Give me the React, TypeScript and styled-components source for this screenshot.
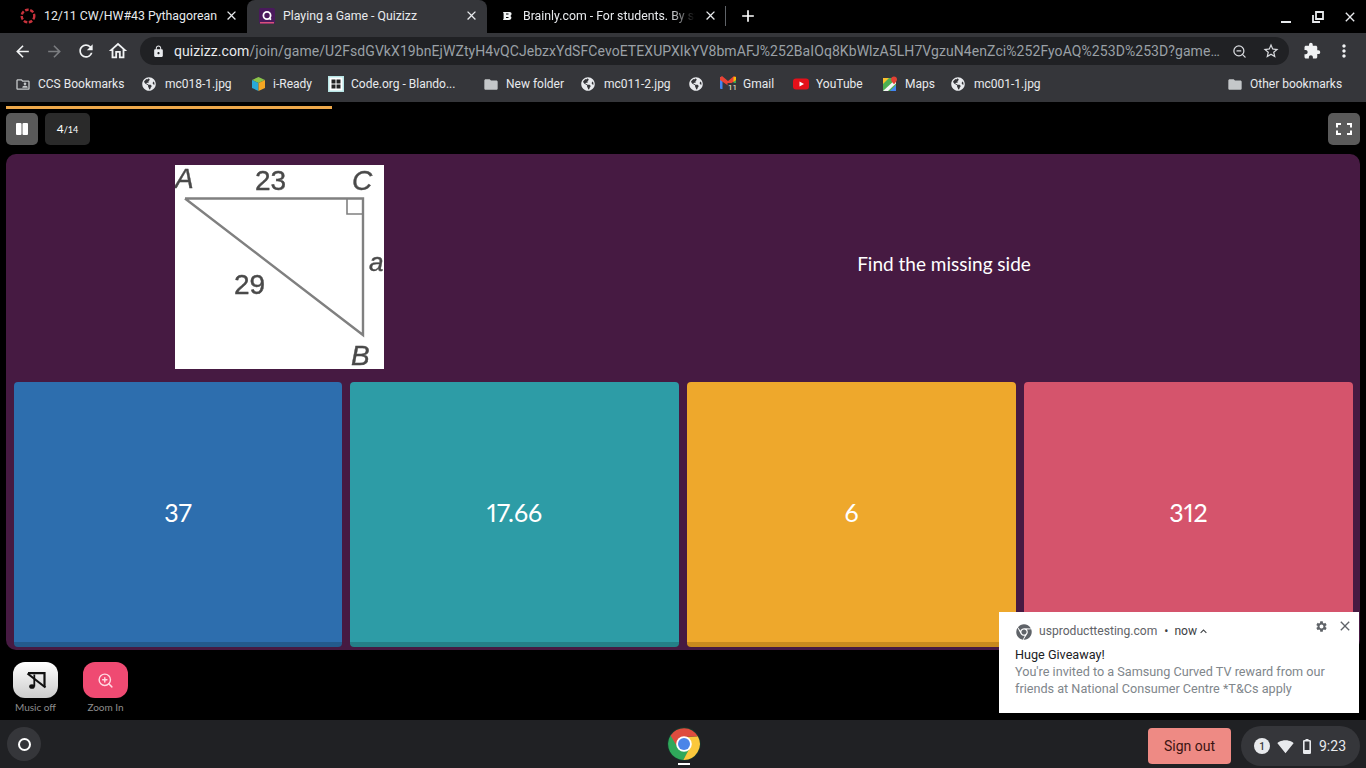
import React from "react";
import styled, { createGlobalStyle } from "styled-components";
import {
  MdArrowBack, MdArrowForward, MdRefresh, MdOutlineHome, MdLock, MdStarBorder, MdExtension,
  MdMoreVert, MdFolder, MdClose, MdAdd, MdSettings, MdKeyboardArrowUp, MdSignalWifi4Bar,
  MdOutlineFolderShared,
} from "react-icons/md";
import { FaChrome, FaGlobeAmericas } from "react-icons/fa";
import { FiZoomOut, FiZoomIn } from "react-icons/fi";

const Global = createGlobalStyle`
  html, body { margin: 0; padding: 0; background: #000; overflow: hidden; }
  * { box-sizing: border-box; }
`;

const UI = `"Roboto", "Liberation Sans", sans-serif`;
const QUIZ = `"Lato", "Open Sans", sans-serif`;

const Page = styled.div`
  position: relative; width: 1366px; height: 768px; display: flex; flex-direction: column;
  background: #000; overflow: hidden; font-family: ${UI};
`;

const TabStrip = styled.div`
  height: 33px; display: flex; align-items: stretch; padding-left: 8px; background: #000; flex: none;
`;
const Tab = styled.div<{ $active?: boolean; $w: number }>`
  width: ${p => p.$w}px; display: flex; align-items: center; gap: 8px; padding: 0 8px 2px 12px;
  background: ${p => (p.$active ? "#35363a" : "transparent")}; border-radius: 8px 8px 0 0;
  color: #e8eaed; font-size: 12.3px;
`;
const TabTitle = styled.span<{ $fade?: boolean }>`
  flex: 1; white-space: nowrap; min-width: 0;
  ${p => p.$fade ? `overflow: hidden; -webkit-mask-image: linear-gradient(90deg,#000 85%,transparent 100%); mask-image: linear-gradient(90deg,#000 85%,transparent 100%);` : ""}
`;
const Fav = styled.span`
  width: 16px; height: 16px; flex: none; display: flex; align-items: center; justify-content: center;
`;
const TabDivider = styled.div`
  width: 1px; height: 20px; background: #5f6368; align-self: center; margin: -2px 0 0 -1px;
`;
const NewTab = styled.div`
  width: 20px; margin-left: 12px; padding-bottom: 2px; display: flex; align-items: center; justify-content: center; color: #fff;
`;
const WindowControls = styled.div`
  margin-left: auto; display: flex; align-items: center; color: #e8eaed;
`;
const WinBtn = styled.div`
  width: 32px; height: 33px; display: flex; align-items: center; justify-content: center;
`;

const Toolbar = styled.div`
  height: 36px; flex: none; background: #35363a; display: flex; align-items: center; padding-left: 6px;
`;
const NavBtn = styled.div<{ $dim?: boolean }>`
  width: 32px; height: 32px; display: flex; align-items: center; justify-content: center;
  color: ${p => (p.$dim ? "#7b7d80" : "#f1f3f4")}; flex: none;
`;
const Omnibox = styled.div`
  width: 1149px; height: 28px; margin: 0 7px 0 6px; border-radius: 14px; background: #202124;
  display: flex; align-items: center; padding: 0 2px 0 12px; color: #e8eaed; font-size: 14px; flex: none;
`;
const Url = styled.div`
  flex: 1; margin-left: 9px; white-space: nowrap; overflow: hidden; text-overflow: ellipsis; color: #9aa0a6;
  letter-spacing: 0.07px;
  & b { font-weight: 400; color: #e8eaed; }
`;
const OmniIcon = styled.div`
  width: 32px; height: 28px; display: flex; align-items: center; justify-content: center; color: #dadce0; flex: none;
`;

const Bookmarks = styled.div`
  height: 33px; flex: none; background: #35363a; display: flex; align-items: center; padding-left: 7px;
  color: #e8eaed; font-size: 12px; padding-bottom: 3px;
`;
const Bookmark = styled.div<{ $w: number }>`
  width: ${p => p.$w}px; flex: none; display: flex; align-items: center; gap: 7px; padding-left: 8px; white-space: nowrap;
`;
const BookmarkSpacer = styled.div`
  flex: 1;
`;

const Game = styled.div`
  flex: 1; display: flex; flex-direction: column; background: #000; padding: 4px 6px 0; min-height: 0;
`;
const Progress = styled.div`
  width: 326px; height: 3px; background: #eda84a; flex: none;
`;
const TopRow = styled.div`
  display: flex; align-items: center; gap: 7px; margin-top: 4px; height: 32px; flex: none;
`;
const SquareBtn = styled.div<{ $right?: boolean }>`
  width: 32px; height: 32px; border-radius: 5px; background: #5a5a5a; color: #fff;
  display: flex; align-items: center; justify-content: center;
  ${p => (p.$right ? "margin-left: auto;" : "")}
`;
const Counter = styled.div`
  width: 45px; height: 32px; border-radius: 5px; background: #2a2a2a; color: #fff;
  display: flex; align-items: baseline; justify-content: center; padding-top: 8px; font-family: ${QUIZ}; font-size: 12px;
  & small { font-size: 9px; }
`;
const Panel = styled.div`
  margin-top: 9px; height: 496px; flex: none; background: #461a42; border-radius: 10px; padding: 0 7px 3px 8px;
  display: flex; flex-direction: column;
`;
const QuestionRow = styled.div`
  height: 228px; display: grid; grid-template-columns: 530px 800px; align-items: center; flex: none;
`;
const Figure = styled.div`
  width: 209px; height: 204px; background: #fff; justify-self: center; margin-top: -2px;
`;
const QuestionText = styled.div`
  text-align: center; color: #fff; font-family: ${QUIZ}; font-size: 19px; font-weight: 400; margin-top: -10px;
`;
const Options = styled.div`
  flex: 1; display: grid; grid-template-columns: 328px 329px 329px 329px; gap: 8px;
`;
const Option = styled.div<{ $bg: string; $edge: string }>`
  background: ${p => p.$bg}; border-bottom: 5px solid ${p => p.$edge}; border-radius: 4px;
  display: flex; align-items: center; justify-content: center;
  color: #fff; font-family: ${QUIZ}; font-size: 25px; padding-bottom: 1px;
  font-variant-numeric: proportional-nums;
`;
const BottomRow = styled.div`
  display: flex; gap: 25px; padding: 12px 0 0 7px; flex: none;
`;
const RoundAction = styled.div`
  width: 45px; display: flex; flex-direction: column; align-items: center;
  font-family: ${QUIZ}; font-size: 10px; color: #8d8d8d; white-space: nowrap;
`;
const ActionFace = styled.div<{ $bg: string }>`
  width: 45px; height: 36px; border-radius: 12px; background: ${p => p.$bg}; margin-bottom: 3px;
  display: flex; align-items: center; justify-content: center;
`;

const Shelf = styled.div`
  height: 48px; flex: none; background: #202124; display: grid; grid-template-columns: 1fr 34px 1fr; align-items: center;
`;
const Launcher = styled.div`
  width: 34px; height: 34px; margin-left: 7px; border-radius: 50%; background: #35363a;
  display: flex; align-items: center; justify-content: center;
`;
const Ring = styled.div`
  width: 13px; height: 13px; border-radius: 50%; border: 2px solid #fff;
`;
const ChromeSlot = styled.div`
  position: relative; width: 34px; height: 34px; margin-left: 1px;
`;
const ActiveDot = styled.div`
  position: absolute; left: 11px; bottom: -4px; width: 12px; height: 2px; background: #fff;
`;
const ShelfRight = styled.div`
  display: flex; justify-content: flex-end; align-items: center; padding-right: 6px;
`;
const SignOut = styled.div`
  width: 83px; height: 36px; margin-top: 4px; border-radius: 4px; background: #ee8a84; color: #3c1412; font-size: 14px;
  display: flex; align-items: center; justify-content: center;
`;
const Tray = styled.div`
  margin-left: 10px; width: 119px; height: 40px; margin-top: 4px; border-radius: 20px; background: #35363a; color: #e8eaed;
  display: flex; align-items: center; padding-left: 13px; font-size: 14px;
`;
const Badge = styled.div`
  width: 16px; height: 16px; border-radius: 50%; background: #e8eaed; color: #35363a; font-size: 10px; font-weight: 500;
  display: flex; align-items: center; justify-content: center; margin-right: 7px;
`;
const BatterySlot = styled.span`
  display: flex; margin-left: 9px;
`;
const Clock = styled.span`
  margin-left: 8px;
`;

const Toast = styled.div`
  position: absolute; left: 999px; top: 612px; width: 360px; height: 101px; background: #fff; padding: 11px 16px 0 16px;
  font-size: 12.65px; color: #80868b; line-height: 17px;
`;
const ToastHead = styled.div`
  display: flex; align-items: center; height: 17px; font-size: 12.1px; color: #5f6368;
`;
const ToastSource = styled.span`
  margin-left: 7px;
`;
const ToastNow = styled.span`
  margin-left: 7px; color: #3c4043; display: flex; align-items: center;
`;
const ToastTools = styled.div`
  position: absolute; right: 6px; top: 6px; display: flex; align-items: center; gap: 9px; color: #5f6368;
`;
const ToastTitle = styled.div`
  margin-top: 6px; color: #202124;
`;

const tabClose = <MdClose size={15} color="#e8eaed" />;
const globe = <FaGlobeAmericas size={14} color="#e8eaed" style={{ marginLeft: -2 }} />;
const folder = <MdFolder size={17} color="#c4c7c9" />;

const RedRing = () => (
  <svg width="16" height="16" viewBox="0 0 16 16">
    <circle cx="8" cy="8" r="6.3" fill="none" stroke="#c8323c" strokeWidth="2.4" strokeDasharray="3.6 1.6" />
  </svg>
);
const QuizizzMark = () => (
  <svg width="16" height="16" viewBox="0 0 16 16">
    <rect width="16" height="16" rx="2" fill="#4a1a5c" />
    <rect x="1" y="14" width="14" height="1.5" fill="#d8527a" />
    <circle cx="8" cy="7.5" r="3.6" fill="none" stroke="#fff" strokeWidth="1.8" />
    <path d="M10 10l2 1.6" stroke="#fff" strokeWidth="1.8" />
  </svg>
);
const BrainlyMark = () => (
  <svg width="16" height="16" viewBox="0 0 16 16">
    <path d="M4 4h6.5c1.6 0 2.2 1 2 2.2-.1.8-.6 1.4-1.2 1.7.8.3 1.2 1 1.1 1.9C12.2 11.2 11.3 12 9.8 12H4l.6-1.5V5.5z" fill="#f1f3f4" />
    <path d="M7 6h2.5M7 9.5h2.500" stroke="#000" strokeWidth="1.2" />
  </svg>
);
const ReadyCube = () => (
  <svg width="15" height="16" viewBox="0 0 15 16">
    <path d="M7.5 1L14 4 7.5 7 1 4z" fill="#8bc34a" />
    <path d="M1 4l6.5 3v8L1 12z" fill="#29a9d6" />
    <path d="M14 4L7.5 7v8L14 12z" fill="#f4a623" />
  </svg>
);
const CodeOrg = () => (
  <svg width="16" height="16" viewBox="0 0 16 16">
    <rect width="16" height="16" fill="#b9e6e6" />
    <rect x="1.5" y="1.5" width="13" height="13" fill="#fff" />
    <rect x="3.5" y="3.5" width="4" height="4" fill="#222" />
    <rect x="8.5" y="3.5" width="4" height="4" fill="#222" />
    <rect x="3.5" y="8.5" width="4" height="4" fill="#222" />
    <rect x="8.5" y="8.5" width="4" height="4" fill="#222" />
  </svg>
);
const GmailMark = () => (
  <svg width="16" height="18" viewBox="0 0 16 18">
    <path d="M0 2h2.500v12H1a1 1 0 0 1-1-1z" fill="#4285f4" />
    <path d="M13.500 2H16v11a1 1 0 0 1-1 1h-1.500z" fill="#34a853" />
    <path d="M0 2.500L2 1l6 5 6-5 2 1.500V5L8 10.500 0 5z" fill="#ea4335" />
    <path d="M13.500 2L16 1.800V5l-2.500 2z" fill="#fbbc04" />
    <rect x="7.500" y="8" width="8.500" height="8" fill="#35363a" />
    <text x="8" y="15" fontSize="8" fill="#eef5d8" fontFamily="Roboto, sans-serif">11</text>
  </svg>
);
const YoutubeMark = () => (
  <svg width="16" height="16" viewBox="0 0 16 16">
    <rect y="2.5" width="16" height="11" rx="3" fill="#e5101a" />
    <path d="M6.5 5.5L11 8l-4.5 2.5z" fill="#fff" />
  </svg>
);
const MapsMark = () => (
  <svg width="16" height="16" viewBox="0 0 16 16">
    <rect x="1" y="2" width="13" height="13" fill="#4caf50" />
    <path d="M1 15L14 3v4.5L6 15z" fill="#f5f5f5" />
    <path d="M1 2h6L1 8z" fill="#fbc02d" />
    <path d="M8 15l6-6v6z" fill="#4285f4" />
    <path d="M12 .5c-1.800 0-3 1.300-3 2.900 0 2 3 4.600 3 4.600s3-2.600 3-4.600c0-1.600-1.200-2.900-3-2.900z" fill="#e34133" />
  </svg>
);
const MusicOffIcon = () => (
  <svg width="24" height="24" viewBox="0 0 24 24" fill="none">
    <ellipse cx="8" cy="18.5" rx="2.800" ry="2.300" fill="#111" />
    <path d="M10.300 18.500V6.500" stroke="#111" strokeWidth="1.800" />
    <path d="M4 5.200H20.500V19" stroke="#111" strokeWidth="2.200" />
    <path d="M3.500 5.500L21.500 19.500" stroke="#111" strokeWidth="2.200" />
  </svg>
);
const PauseIcon = () => (
  <svg width="14" height="12" viewBox="0 0 14 12" fill="#fff">
    <rect x="1" width="5.500" height="12" rx="1" />
    <rect x="7.500" width="5.500" height="12" rx="1" />
  </svg>
);
const FullscreenIcon = () => (
  <svg width="16" height="12" viewBox="0 0 16 12" fill="none" stroke="#fff" strokeWidth="2">
    <path d="M5 1H1V4.500M11 1H15V4.500M5 11H1V7.500M11 11H15V7.500" />
  </svg>
);
const BatteryIcon = () => (
  <svg width="8" height="15" viewBox="0 0 8 15">
    <rect x="2.500" width="3" height="2" fill="#e8eaed" />
    <rect x=".8" y="1.800" width="6.400" height="12.400" rx=".5" fill="#35363a" stroke="#e8eaed" strokeWidth="1.600" />
    <rect x="1" y="11" width="6" height="3" fill="#e8eaed" />
  </svg>
);
const ChromeLogo = () => (
  <svg width="34" height="34" viewBox="0 0 48 48">
    <circle cx="24" cy="24" r="23.500" fill="#0a5c3a" opacity="0.4" />
    <path d="M5 12 A22.500 22.500 0 0 0 23 46.500 L34 28 L24 24 Z" fill="#2fa85a" />
    <path d="M43.500 13 A22.500 22.500 0 0 1 23 46.500 L33 28 L24 14 Z" fill="#fbc83c" />
    <path d="M43.500 13 A22.500 22.500 0 0 0 5 12 L15 29 L24 14 Z" fill="#de4c3e" />
    <circle cx="24" cy="24" r="11" fill="#fff" />
    <circle cx="24" cy="24" r="8.500" fill="#4b85e8" />
  </svg>
);
const TriangleFigure = () => (
  <svg width="209" height="204" viewBox="0 0 209 204">
    <g filter="url(#soft)">
      <path d="M10 33.500H188V170L10 33.500" fill="none" stroke="#808080" strokeWidth="2.400" />
      <path d="M172 33V49H188" fill="none" stroke="#808080" strokeWidth="1.600" />
      <g fill="#4a4a4a" stroke="#4a4a4a" strokeWidth=".4" fontFamily="Liberation Sans, sans-serif" fontSize="28">
        <text x="0" y="23" fontStyle="italic">A</text>
        <text x="80" y="25">23</text>
        <text x="177" y="25" fontStyle="italic">C</text>
        <text x="194" y="106" fontStyle="italic" fontSize="26">a</text>
        <text x="59" y="129">29</text>
        <text x="176" y="200" fontStyle="italic">B</text>
      </g>
    </g>
    <defs>
      <filter id="soft"><feGaussianBlur stdDeviation=".7" /></filter>
    </defs>
  </svg>
);

const bookmarks: { w: number; icon: React.ReactNode; label?: string }[] = [
  { w: 127, icon: <MdOutlineFolderShared size={17} color="#c4c7c9" />, label: "CCS Bookmarks" },
  { w: 108, icon: globe, label: "mc018-1.jpg" },
  { w: 78, icon: <ReadyCube />, label: "i-Ready" },
  { w: 155, icon: <CodeOrg />, label: "Code.org - Blando..." },
  { w: 98, icon: folder, label: "New folder" },
  { w: 108, icon: globe, label: "mc011-2.jpg" },
  { w: 31, icon: globe },
  { w: 73, icon: <GmailMark />, label: "Gmail" },
  { w: 89, icon: <YoutubeMark />, label: "YouTube" },
  { w: 69, icon: <MapsMark />, label: "Maps" },
  { w: 150, icon: globe, label: "mc001-1.jpg" },
];

const answers = [
  { t: "37", bg: "#2d6eae", edge: "#245a8c" },
  { t: "17.66", bg: "#2d9ca6", edge: "#257f87" },
  { t: "6", bg: "#eea82c", edge: "#c98a1e" },
  { t: "312", bg: "#d5546c", edge: "#ad4458" },
];

export default function App() {
  return (
    <Page>
      <Global />
      <TabStrip>
        <Tab $w={239}><Fav><RedRing /></Fav><TabTitle>12/11 CW/HW#43 Pythagorean</TabTitle>{tabClose}</Tab>
        <Tab $w={240} $active><Fav><QuizizzMark /></Fav><TabTitle>Playing a Game - Quizizz</TabTitle>{tabClose}</Tab>
        <Tab $w={239}><Fav><BrainlyMark /></Fav><TabTitle $fade>Brainly.com - For students. By students.</TabTitle>{tabClose}</Tab>
        <TabDivider />
        <NewTab><MdAdd size={20} /></NewTab>
        <WindowControls>
          <WinBtn><svg width="12" height="12" viewBox="0 0 12 12"><rect x="1" y="10" width="10" height="2" fill="#e8eaed" /></svg></WinBtn>
          <WinBtn><svg width="12" height="12" viewBox="0 0 12 12"><path d="M4 1h7v7H4z" fill="none" stroke="#e8eaed" strokeWidth="1.800" /><path d="M1 4v7h7" fill="none" stroke="#e8eaed" strokeWidth="1.800" /></svg></WinBtn>
          <WinBtn><MdClose size={16} /></WinBtn>
        </WindowControls>
      </TabStrip>
      <Toolbar>
        <NavBtn><MdArrowBack size={19} /></NavBtn>
        <NavBtn $dim><MdArrowForward size={19} /></NavBtn>
        <NavBtn><MdRefresh size={20} /></NavBtn>
        <NavBtn><MdOutlineHome size={22} /></NavBtn>
        <Omnibox>
          <MdLock size={13} color="#e8eaed" />
          <Url><b>quizizz.com</b>/join/game/U2FsdGVkX19bnEjWZtyH4vQCJebzxYdSFCevoETEXUPXIkYV8bmAFJ%252BaIOq8KbWlzA5LH7VgzuN4enZci%252FyoAQ%253D%253D?gameType=live</Url>
          <OmniIcon><FiZoomOut size={15} /></OmniIcon>
          <OmniIcon><MdStarBorder size={18} /></OmniIcon>
        </Omnibox>
        <NavBtn><MdExtension size={18} /></NavBtn>
        <NavBtn><MdMoreVert size={20} /></NavBtn>
      </Toolbar>
      <Bookmarks>
        {bookmarks.map((b, i) => (
          <Bookmark key={i} $w={b.w}><Fav>{b.icon}</Fav>{b.label && <span>{b.label}</span>}</Bookmark>
        ))}
        <BookmarkSpacer />
        <Bookmark $w={147}><Fav>{folder}</Fav><span>Other bookmarks</span></Bookmark>
      </Bookmarks>
      <Game>
        <Progress />
        <TopRow>
          <SquareBtn><PauseIcon /></SquareBtn>
          <Counter>4<small>/14</small></Counter>
          <SquareBtn $right><FullscreenIcon /></SquareBtn>
        </TopRow>
        <Panel>
          <QuestionRow>
            <Figure><TriangleFigure /></Figure>
            <QuestionText>Find the missing side</QuestionText>
          </QuestionRow>
          <Options>
            {answers.map(a => <Option key={a.t} $bg={a.bg} $edge={a.edge}>{a.t}</Option>)}
          </Options>
        </Panel>
        <BottomRow>
          <RoundAction><ActionFace $bg="linear-gradient(#fff,#ccc)"><MusicOffIcon /></ActionFace>Music off</RoundAction>
          <RoundAction><ActionFace $bg="#ef4a72"><FiZoomIn size={17} color="#ffd9e2" /></ActionFace>Zoom In</RoundAction>
        </BottomRow>
      </Game>
      <Shelf>
        <Launcher><Ring /></Launcher>
        <ChromeSlot><ChromeLogo /><ActiveDot /></ChromeSlot>
        <ShelfRight>
          <SignOut>Sign out</SignOut>
          <Tray>
            <Badge>1</Badge>
            <MdSignalWifi4Bar size={17} />
            <BatterySlot><BatteryIcon /></BatterySlot>
            <Clock>9:23</Clock>
          </Tray>
        </ShelfRight>
      </Shelf>
      <Toast>
        <ToastHead>
          <FaChrome size={16} color="#5f6368" style={{ marginLeft: 1 }} />
          <ToastSource>usproducttesting.com</ToastSource>
          <ToastNow>• &nbsp;now<MdKeyboardArrowUp size={13} /></ToastNow>
        </ToastHead>
        <ToastTools><MdSettings size={13} /><MdClose size={16} /></ToastTools>
        <ToastTitle>Huge Giveaway!</ToastTitle>
        You're invited to a Samsung Curved TV reward from our<br />friends at National Consumer Centre *T&amp;Cs apply
      </Toast>
    </Page>
  );
}
